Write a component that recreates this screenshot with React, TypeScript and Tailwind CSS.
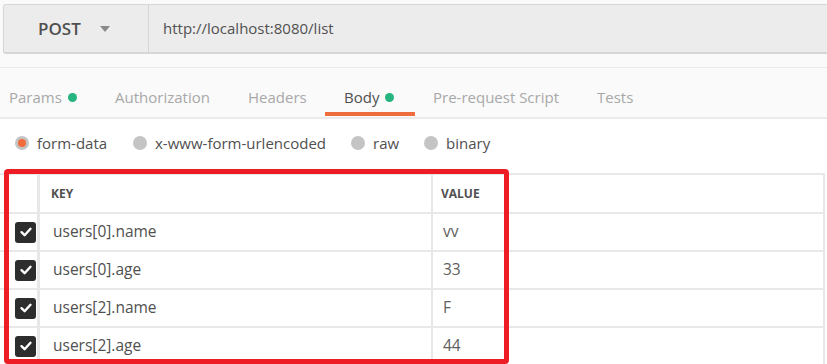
import React from "react";

const font = { fontFamily: '"Open Sans", "Noto Sans", Arial, sans-serif' };

const tabs = [
  { label: "Params", x: "w-[106px]", dot: true },
  { label: "Authorization", x: "w-[133px]" },
  { label: "Headers", x: "w-[96px]" },
  { label: "Body", x: "w-[89px]", dot: true, active: true },
  { label: "Pre-request Script", x: "w-[164px]" },
  { label: "Tests", x: "w-[60px]" },
];

const rows = [
  { key: "users[0].name", value: "vv" },
  { key: "users[0].age", value: "33" },
  { key: "users[2].name", value: "F" },
  { key: "users[2].age", value: "44" },
];

const Check = () => (
  <div className="w-[21px] h-[21px] rounded-[3px] bg-[#2d2d2d] flex items-center justify-center">
    <svg width="14" height="14" viewBox="0 0 14 14">
      <path d="M2.5 7.2 L5.6 10.2 L11.5 3.8" fill="none" stroke="#fff" strokeWidth="2.4" strokeLinecap="round" strokeLinejoin="round" />
    </svg>
  </div>
);

const Radio = ({ on, label, w }: { on?: boolean; label: string; w: string }) => (
  <div className={`flex items-center ${w} shrink-0`}>
    <span className="w-[14px] h-[14px] rounded-full bg-[#c4c4c4] flex items-center justify-center">
      {on && <span className="w-[8px] h-[8px] rounded-full bg-[#f26b3a]" />}
    </span>
    <span className="ml-[8px] text-[15px] text-[#505050]">{label}</span>
  </div>
);

export default function App() {
  return (
    <div className="relative w-[827px] h-[364px] overflow-hidden bg-white" style={font}>
      {/* Request bar */}
      <div className="bg-[#fafafa] pt-[4px] pl-[3px]">
        <div className="flex h-[50px] bg-[#ececec] border border-[#d6d6d6] border-b-2 border-r-0 rounded-l-[3px]">
          <div className="w-[145px] flex items-center border-r border-[#d6d6d6]">
            <span className="ml-[34px] text-[17px] font-semibold text-[#505050]">POST</span>
            <span className="ml-[19px] w-0 h-0 border-l-[5px] border-r-[5px] border-t-[6px] border-l-transparent border-r-transparent border-t-[#8a8a8a]" />
          </div>
          <div className="flex items-center pl-[14px] text-[15px] text-[#505050]">
            http://localhost:8080/list
          </div>
        </div>
        <div className="h-[13px]" />
      </div>

      {/* Tabs */}
      <div className="flex h-[52px] bg-[#fafafa] border-t border-b-2 border-[#ebebeb] pl-[9px]">
        {tabs.map((t) => (
          <div key={t.label} className={`relative flex items-center pt-[9px] ${t.x} shrink-0`}>
            <span className={`text-[15px] ${t.active ? "text-[#505050]" : "text-[#a8a8a8]"}`}>{t.label}</span>
            {t.dot && <span className="ml-[6px] w-[9px] h-[9px] rounded-full bg-[#26b47f]" />}
            {t.active && <span className="absolute left-[-19px] bottom-[1px] w-[90px] h-[4px] bg-[#ef6c3d]" />}
          </div>
        ))}
      </div>

      {/* Body types */}
      <div className="flex items-center h-[54px] pl-[15px] pb-[6px]">
        <Radio on label="form-data" w="w-[118px]" />
        <Radio label="x-www-form-urlencoded" w="w-[218px]" />
        <Radio label="raw" w="w-[73px]" />
        <Radio label="binary" w="w-[90px]" />
      </div>

      {/* Table */}
      <div className="w-[825px] border-t-2 border-r-2 border-[#e8e8e8] text-[15.5px] text-[#505050]">
        <div className="flex h-[39px] border-b-2 border-[#e8e8e8]">
          <div className="w-[40px] border-r-[3px] border-[#e8e8e8]" />
          <div className="w-[391px] flex items-center pl-[11px] text-[12px] font-bold text-[#505050]">KEY</div>
          <div className="flex-1 flex items-center pl-[8px] border-l-2 border-[#e8e8e8] text-[12px] font-bold text-[#505050]">VALUE</div>
        </div>
        {rows.map((r) => (
          <div key={r.key} className="flex h-[38px] border-b-2 border-[#e8e8e8]">
            <div className="w-[40px] flex items-center pl-[15px] border-r-[3px] border-[#e8e8e8]">
              <Check />
            </div>
            <div className="w-[391px] flex items-center pl-[13px]">{r.key}</div>
            <div className="flex-1 flex items-center pl-[10px] border-l-2 border-[#e8e8e8] text-[#606060]">{r.value}</div>
          </div>
        ))}
      </div>

      {/* Highlight box */}
      <div className="absolute left-[4px] top-[169px] w-[505px] h-[195px] border-[5px] border-[#ee1c25] rounded-[4px] pointer-events-none" />
    </div>
  );
}
